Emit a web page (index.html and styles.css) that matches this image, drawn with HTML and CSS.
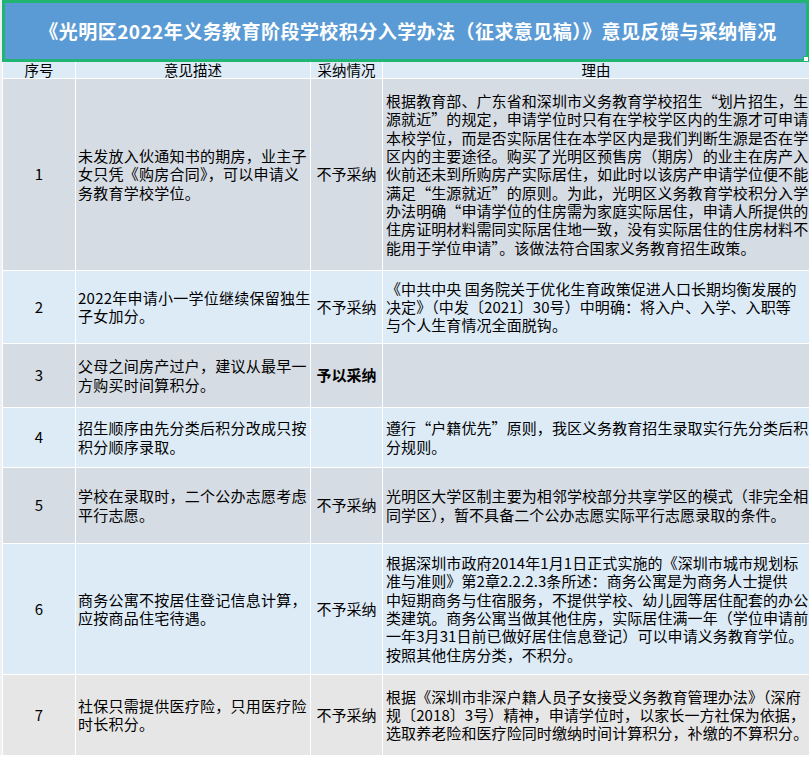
FILE: index.html
```html
<!DOCTYPE html>
<html lang="zh-CN">
<head>
<meta charset="utf-8">
<title>意见反馈与采纳情况</title>
<link rel="stylesheet" href="styles.css">
</head>
<body>
<div class="sheet">
  <div class="title">
    <h1>《光明区2022年义务教育阶段学校积分入学办法（征求意见稿）》意见反馈与采纳情况</h1>
    <span class="handle"></span>
  </div>
  <div class="grid">
    <div class="cell head c">序号</div>
    <div class="cell head c">意见描述</div>
    <div class="cell head c">采纳情况</div>
    <div class="cell head c">理由</div>

    <div class="cell r1 gb c">1</div>
    <div class="cell r1 gb t">未发放入伙通知书的期房，业主子<br>女只凭《购房合同》，可以申请义<br>务教育学校学位。</div>
    <div class="cell r1 gb c">不予采纳</div>
    <div class="cell r1 gb t w">根据教育部、广东省和深圳市义务教育学校招生“划片招生，生<br>源就近”的规定，申请学位时只有在学校学区内的生源才可申请<br>本校学位，而是否实际居住在本学区内是我们判断生源是否在学<br>区内的主要途径。购买了光明区预售房（期房）的业主在房产入<br>伙前还未到所购房产实际居住，如此时以该房产申请学位便不能<br>满足“生源就近”的原则。为此，光明区义务教育学校积分入学<br>办法明确“申请学位的住房需为家庭实际居住，申请人所提供的<br>住房证明材料需同实际居住地一致，没有实际居住的住房材料不<br>能用于学位申请”。该做法符合国家义务教育招生政策。</div>

    <div class="cell r2 lb c">2</div>
    <div class="cell r2 lb t">2022年申请小一学位继续保留独生<br>子女加分。</div>
    <div class="cell r2 lb c">不予采纳</div>
    <div class="cell r2 lb t w">《中共中央 国务院关于优化生育政策促进人口长期均衡发展的<br>决定》（中发〔2021〕30号）中明确：将入户、入学、入职等<br>与个人生育情况全面脱钩。</div>

    <div class="cell r3 gb c">3</div>
    <div class="cell r3 gb t">父母之间房产过户，建议从最早一<br>方购买时间算积分。</div>
    <div class="cell r3 gb c bold">予以采纳</div>
    <div class="cell r3 gb t w"></div>

    <div class="cell r4 lb c">4</div>
    <div class="cell r4 lb t">招生顺序由先分类后积分改成只按<br>积分顺序录取。</div>
    <div class="cell r4 lb c"></div>
    <div class="cell r4 lb t w">遵行“户籍优先”原则，我区义务教育招生录取实行先分类后积<br>分规则。</div>

    <div class="cell r5 gb c">5</div>
    <div class="cell r5 gb t">学校在录取时，二个公办志愿考虑<br>平行志愿。</div>
    <div class="cell r5 gb c">不予采纳</div>
    <div class="cell r5 gb t w">光明区大学区制主要为相邻学校部分共享学区的模式（非完全相<br>同学区），暂不具备二个公办志愿实际平行志愿录取的条件。</div>

    <div class="cell r6 lb c">6</div>
    <div class="cell r6 lb t">商务公寓不按居住登记信息计算，<br>应按商品住宅待遇。</div>
    <div class="cell r6 lb c">不予采纳</div>
    <div class="cell r6 lb t w">根据深圳市政府2014年1月1日正式实施的《深圳市城市规划标<br>准与准则》第2章2.2.2.3条所述：商务公寓是为商务人士提供<br>中短期商务与住宿服务，不提供学校、幼儿园等居住配套的办公<br>类建筑。商务公寓当做其他住房，实际居住满一年（学位申请前<br>一年3月31日前已做好居住信息登记）可以申请义务教育学位。<br>按照其他住房分类，不积分。</div>

    <div class="cell r7 gr c">7</div>
    <div class="cell r7 gr t">社保只需提供医疗险，只用医疗险<br>时长积分。</div>
    <div class="cell r7 gr c">不予采纳</div>
    <div class="cell r7 gr t w">根据《深圳市非深户籍人员子女接受义务教育管理办法》（深府<br>规〔2018〕3号）精神，申请学位时，以家长一方社保为依据，<br>选取养老险和医疗险同时缴纳时间计算积分，补缴的不算积分。</div>
  </div>
</div>
</body>
</html>
```

FILE: styles.css
```css
html, body {
  margin: 0;
  padding: 0;
  background: #ffffff;
}

body {
  width: 809px;
  height: 757px;
  overflow: hidden;
  font-family: "Noto Sans CJK SC", "Liberation Sans", sans-serif;
  color: #000;
}

.sheet {
  width: 809px;
  background: linear-gradient(to right, #eef0f3 0, #eef0f3 2px, #ffffff 2px);
}

.title {
  position: relative;
  margin-left: 2px;
  width: 807px;
  height: 62px;
  box-sizing: border-box;
  border: 3px solid #21b573;
  background: #5b9bd5;
  display: flex;
  align-items: center;
  justify-content: center;
}

.title h1 {
  margin: 0;
  padding-left: 5px;
  font-size: 19px;
  font-weight: 700;
  letter-spacing: 0.45px;
  color: #ffffff;
  white-space: nowrap;
  line-height: 24px;
}

.handle {
  position: absolute;
  right: -3px;
  bottom: -3px;
  width: 4px;
  height: 4px;
  background: #ffffff;
  border: 1px solid #21b573;
}

.grid {
  margin-left: 3px;
  display: grid;
  grid-template-columns: 72px 234px 71px 426px;
  grid-template-rows: 16px 191px 72px 63px 59px 75px 130px 80px;
  column-gap: 1px;
  row-gap: 1px;
  background: #ffffff;
}

.cell {
  display: flex;
  align-items: center;
  font-size: 15px;
  line-height: 18.3px;
  white-space: nowrap;
  overflow: hidden;
}

.c {
  justify-content: center;
}

.t {
  padding-left: 2px;
  letter-spacing: 0.25px;
}

.w {
  padding-left: 3px;
  letter-spacing: 0.08px;
}

.head {
  background: #ddebf7;
  line-height: 16px;
  font-size: 14.5px;
  overflow: visible;
}

.gb {
  background: #d6dce4;
}

.lb {
  background: #ddebf7;
}

.gr {
  background: #e7e6e6;
}

.bold {
  font-weight: 700;
}
```
